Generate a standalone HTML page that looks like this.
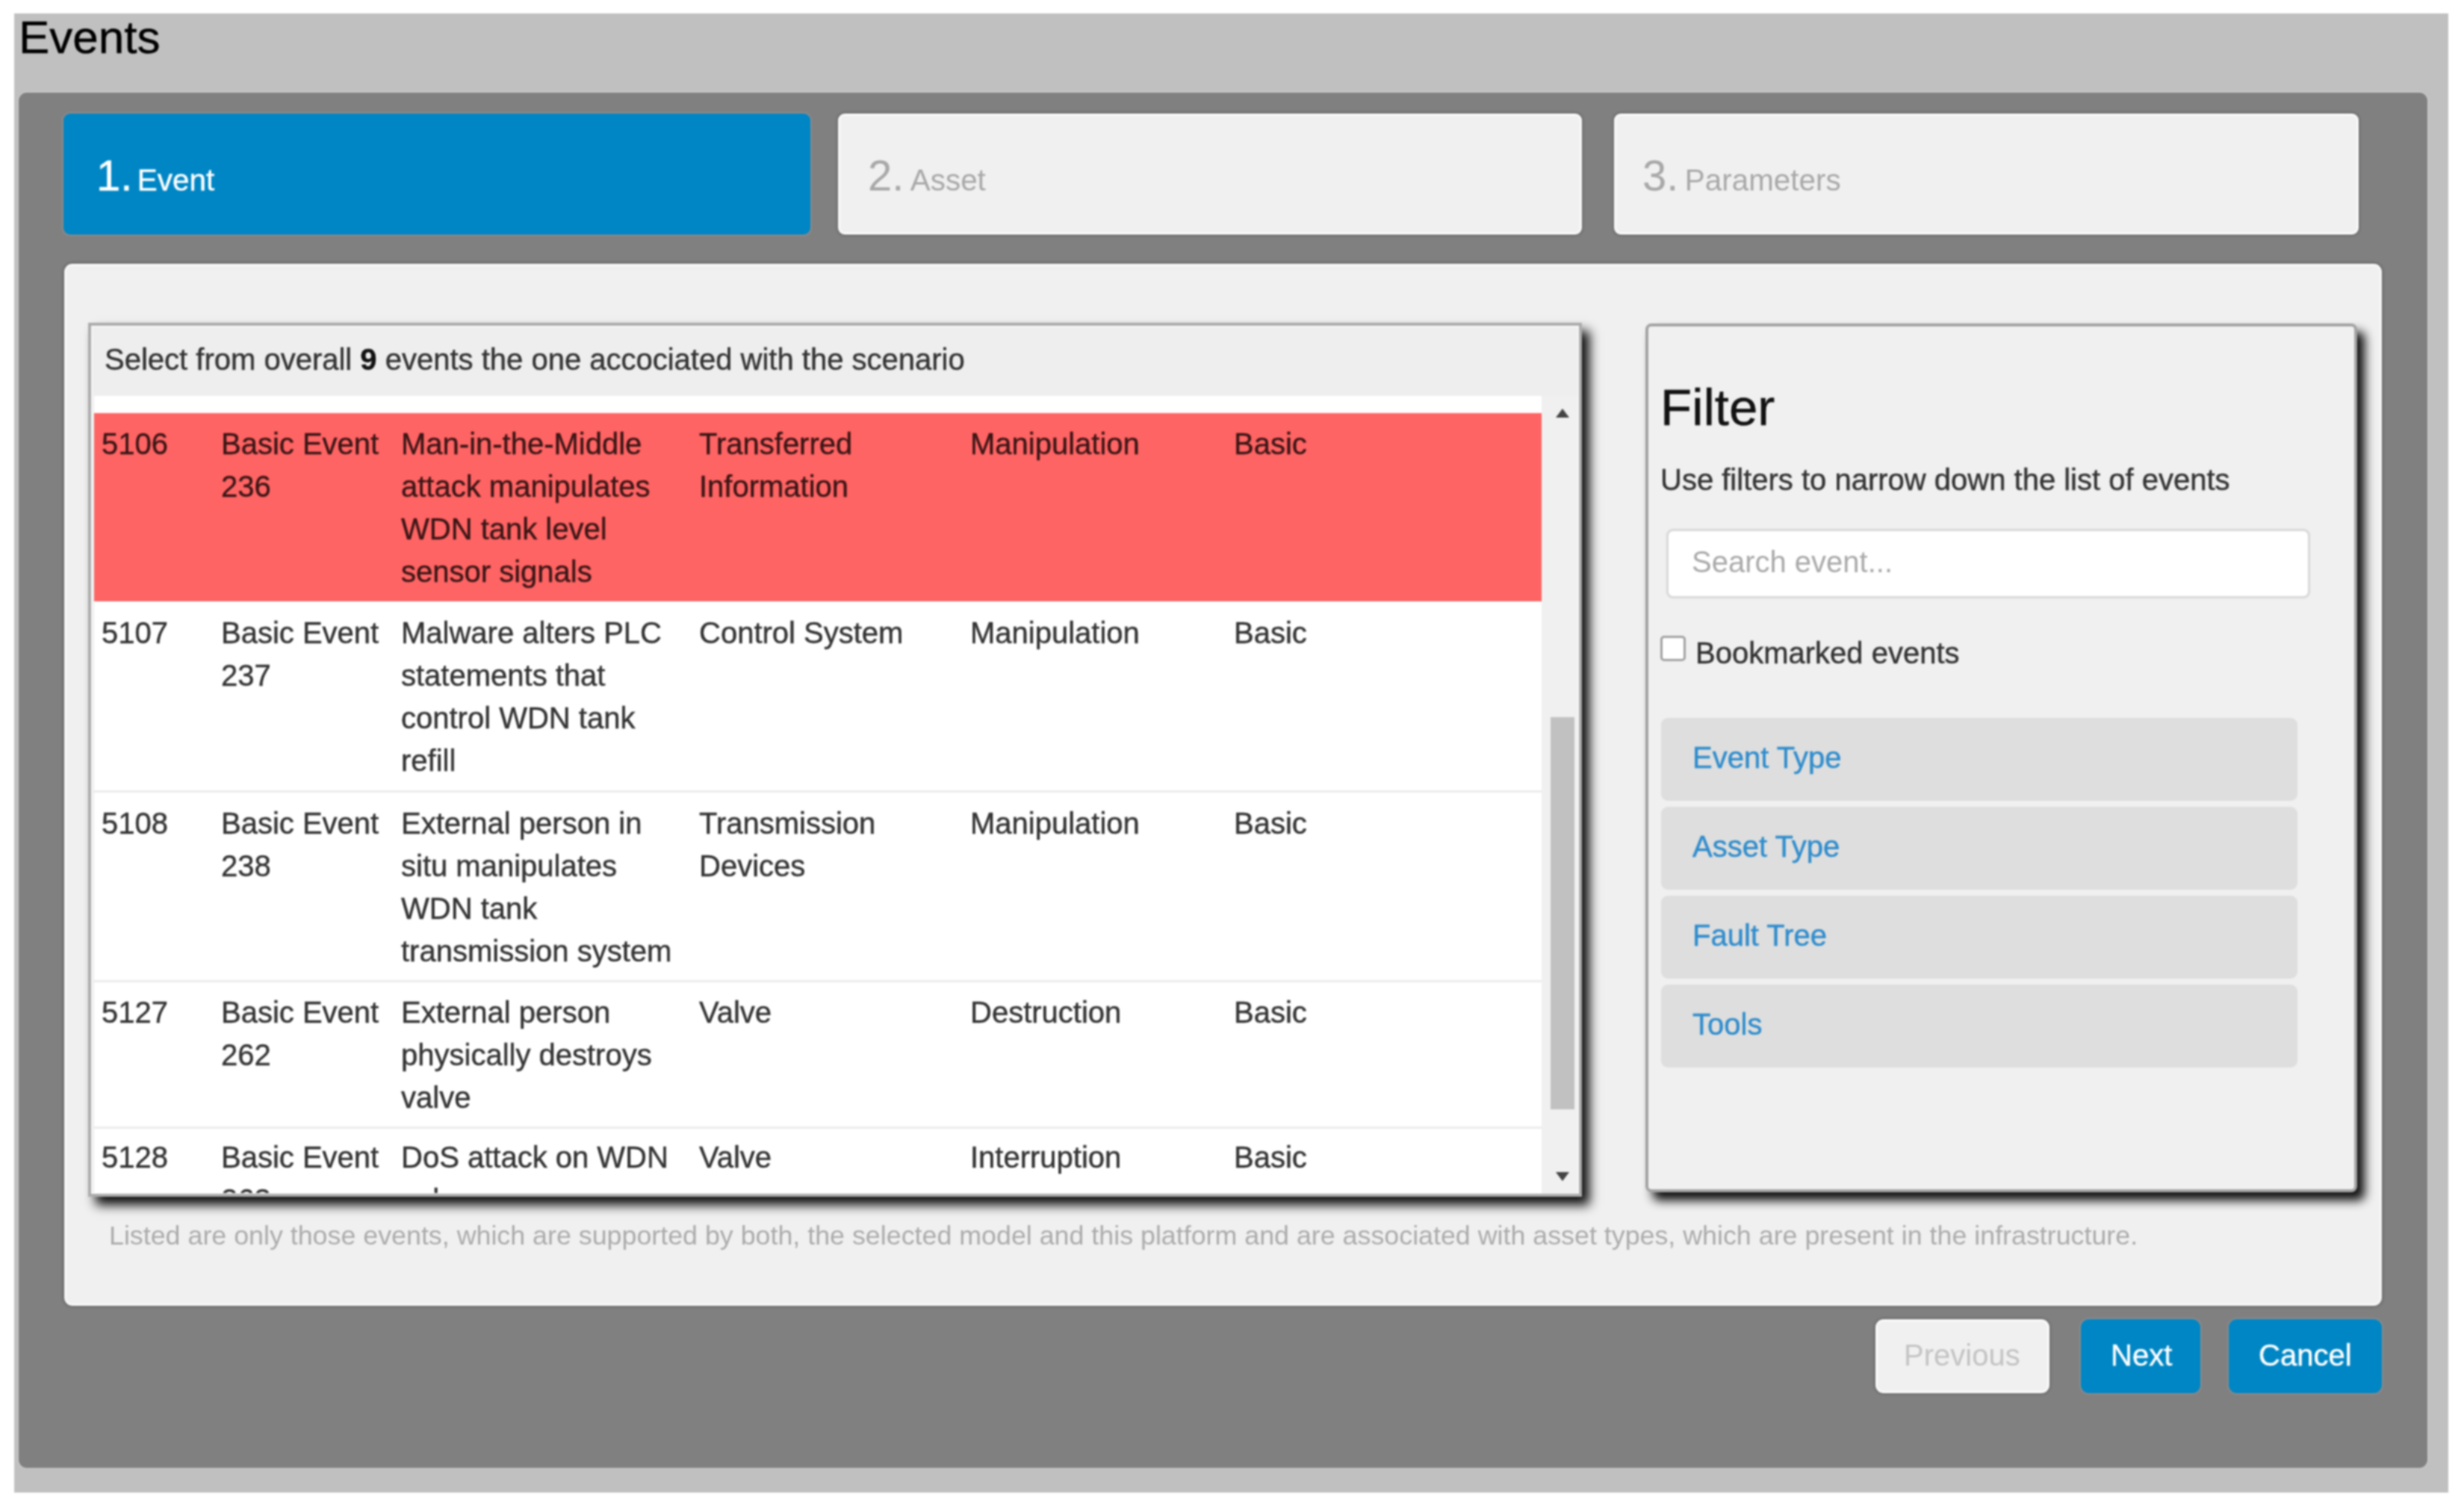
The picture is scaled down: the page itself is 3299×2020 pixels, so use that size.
<!DOCTYPE html>
<html><head><meta charset="utf-8">
<style>
*{margin:0;padding:0;box-sizing:border-box}
html,body{width:3299px;height:2020px;overflow:hidden;background:#fff;font-family:"Liberation Sans",sans-serif;color:#333}
.a{position:absolute}
.t,.cell,.acct{-webkit-text-stroke:0.45px currentColor}
.lt{-webkit-text-stroke:0 !important}
.t{position:absolute;line-height:1;white-space:nowrap}
#outer{left:19px;top:18px;width:3259px;height:1980px;background:#c0c0c0}
#title{left:25px;top:19px;font-size:62px;color:#000}
#panel{left:25px;top:124px;width:3225px;height:1841px;background:#808080;border-radius:11px;box-shadow:0 0 0 2px #c6c6c6}
.tab{top:152px;height:162px;border-radius:9px}
#tab1{left:85px;width:1000px;background:#0086c4;box-shadow:0 0 0 2px #8a8a8a}
#tab2{left:1122px;width:996px;background:#f0f0f0;border:3px solid #fafafa;box-shadow:0 0 3px 2px #6e6e6e}
#tab3{left:2161px;width:997px;background:#f0f0f0;border:3px solid #fafafa;box-shadow:0 0 3px 2px #6e6e6e}
.num{font-size:58px}
.lbl{font-size:40.4px;margin-left:4px}
#content{left:86px;top:353px;width:3103px;height:1395px;background:#f0f0f0;border:3px solid #f8f8f8;border-radius:11px;box-shadow:0 0 3px 2px #6a6a6a}
#tbox{left:118px;top:432px;width:2000px;height:1170px;background:#eeeeee;border:4px solid #acacac;box-shadow:10px 11px 14px rgba(0,0,0,.95),inset 0 0 0 2px #f8f8f8}
#fbox{left:2203px;top:433px;width:953px;height:1163px;background:#f0f0f0;border:4px solid #a4a4a4;border-radius:8px;box-shadow:10px 11px 14px rgba(0,0,0,.95)}
.row{position:absolute;left:126px;width:1938px;background:#fff;border-top:3px solid #ececec}
.cell{position:absolute;font-size:40px;line-height:57px;white-space:nowrap;color:#333}
.acc{position:absolute;left:2224px;width:852px;height:111px;background:#dedede;border-radius:9px}
.acct{position:absolute;left:42px;top:33px;font-size:40px;line-height:1;color:#2f8ccc}
.btn{position:absolute;top:1766px;height:99px;border-radius:11px}
</style></head><body><div id="wrap" style="position:absolute;left:0;top:0;width:3299px;height:2020px;filter:blur(0.9px)">
<div id="outer" class="a"></div>
<div id="title" class="t">Events</div>
<div id="panel" class="a"></div>

<div id="tab1" class="a tab"></div>
<div id="tab2" class="a tab"></div>
<div id="tab3" class="a tab"></div>
<div class="t" style="left:129px;top:206px;color:#fff"><span class="num">1.</span> <span class="lbl" style="margin-left:2px">Event</span></div>
<div class="t lt" style="left:1162px;top:206px;color:#a8a8a8"><span class="num">2.</span> <span class="lbl">Asset</span></div>
<div class="t lt" style="left:2199px;top:206px;color:#a8a8a8"><span class="num">3.</span> <span class="lbl">Parameters</span></div>

<div id="content" class="a"></div>

<div id="tbox" class="a"></div>
<div class="t" style="left:140px;top:461px;font-size:40px;color:#333">Select from overall <b style="color:#111">9</b> events the one accociated with the scenario</div>
<div class="a" style="left:126px;top:530px;width:1938px;height:23px;background:#fff"></div>
<div id="rows" class="a" style="left:0;top:0;width:3299px;height:1597px;overflow:hidden;clip-path:inset(530px 0 0 0)">
<!--ROWS-->
<div class="row" style="top:553px;height:252px;background:#ff6464;border-top:0;"></div>
<div class="cell" style="left:136px;top:566px;color:#3a1515;">5106</div>
<div class="cell" style="left:296px;top:566px;color:#3a1515;">Basic Event<br>236</div>
<div class="cell" style="left:537px;top:566px;color:#3a1515;">Man-in-the-Middle<br>attack manipulates<br>WDN tank level<br>sensor signals</div>
<div class="cell" style="left:936px;top:566px;color:#3a1515;">Transferred<br>Information</div>
<div class="cell" style="left:1299px;top:566px;color:#3a1515;">Manipulation</div>
<div class="cell" style="left:1652px;top:566px;color:#3a1515;">Basic</div>
<div class="row" style="top:805px;height:253px;border-top-color:#fff;"></div>
<div class="cell" style="left:136px;top:819px;">5107</div>
<div class="cell" style="left:296px;top:819px;">Basic Event<br>237</div>
<div class="cell" style="left:537px;top:819px;">Malware alters PLC<br>statements that<br>control WDN tank<br>refill</div>
<div class="cell" style="left:936px;top:819px;">Control System</div>
<div class="cell" style="left:1299px;top:819px;">Manipulation</div>
<div class="cell" style="left:1652px;top:819px;">Basic</div>
<div class="row" style="top:1058px;height:254px;"></div>
<div class="cell" style="left:136px;top:1074px;">5108</div>
<div class="cell" style="left:296px;top:1074px;">Basic Event<br>238</div>
<div class="cell" style="left:537px;top:1074px;">External person in<br>situ manipulates<br>WDN tank<br>transmission system</div>
<div class="cell" style="left:936px;top:1074px;">Transmission<br>Devices</div>
<div class="cell" style="left:1299px;top:1074px;">Manipulation</div>
<div class="cell" style="left:1652px;top:1074px;">Basic</div>
<div class="row" style="top:1312px;height:196px;"></div>
<div class="cell" style="left:136px;top:1327px;">5127</div>
<div class="cell" style="left:296px;top:1327px;">Basic Event<br>262</div>
<div class="cell" style="left:537px;top:1327px;">External person<br>physically destroys<br>valve</div>
<div class="cell" style="left:936px;top:1327px;">Valve</div>
<div class="cell" style="left:1299px;top:1327px;">Destruction</div>
<div class="cell" style="left:1652px;top:1327px;">Basic</div>
<div class="row" style="top:1508px;height:260px;"></div>
<div class="cell" style="left:136px;top:1521px;">5128</div>
<div class="cell" style="left:296px;top:1521px;">Basic Event<br>263</div>
<div class="cell" style="left:537px;top:1521px;">DoS attack on WDN<br>valve</div>
<div class="cell" style="left:936px;top:1521px;">Valve</div>
<div class="cell" style="left:1299px;top:1521px;">Interruption</div>
<div class="cell" style="left:1652px;top:1521px;">Basic</div>
<!--/ROWS-->
</div>


<!-- scrollbar -->
<div class="a" style="left:2064px;top:530px;width:48px;height:1068px;background:#f0f0f0"></div>
<div class="a" style="left:2076px;top:960px;width:32px;height:525px;background:#c1c1c1"></div>
<div class="a" style="left:2083px;top:547px;width:0;height:0;border-left:9px solid transparent;border-right:9px solid transparent;border-bottom:12px solid #444"></div>
<div class="a" style="left:2083px;top:1569px;width:0;height:0;border-left:9px solid transparent;border-right:9px solid transparent;border-top:12px solid #444"></div>

<div class="t lt" style="left:146px;top:1637px;font-size:35.8px;color:#ababab">Listed are only those events, which are supported by both, the selected model and this platform and are associated with asset types, which are present in the infrastructure.</div>
<div id="fbox" class="a"></div>

<div class="t" style="left:2223px;top:511px;font-size:69px;color:#111">Filter</div>
<div class="t" style="left:2223px;top:622px;font-size:40px;color:#333">Use filters to narrow down the list of events</div>
<div class="a" style="left:2231px;top:708px;width:862px;height:93px;background:#fff;border:3px solid #d9d9d9;border-radius:9px;box-shadow:0 0 2px #e0e0e0"></div>
<div class="t lt" style="left:2265px;top:732px;font-size:40px;color:#a9a9a9">Search event...</div>
<div class="a" style="left:2223px;top:851px;width:34px;height:34px;background:#fff;border:3px solid #a2a2a2;border-radius:5px"></div>
<div class="t" style="left:2270px;top:854px;font-size:40px;color:#333">Bookmarked events</div>
<div class="acc" style="top:961px"><div class="acct">Event Type</div></div>
<div class="acc" style="top:1080px"><div class="acct">Asset Type</div></div>
<div class="acc" style="top:1199px"><div class="acct">Fault Tree</div></div>
<div class="acc" style="top:1318px"><div class="acct">Tools</div></div>

<div class="btn" style="left:2511px;width:233px;background:#f0f0f0;border:3px solid #fafafa;box-shadow:0 0 3px 2px #6e6e6e"></div>
<div class="btn" style="left:2786px;width:160px;background:#0086c4;box-shadow:0 0 0 2px #8a8a8a"></div>
<div class="btn" style="left:2984px;width:205px;background:#0086c4;box-shadow:0 0 0 2px #8a8a8a"></div>

<div class="t lt" style="left:2549px;top:1794px;font-size:40px;color:#c3c3c3">Previous</div>
<div class="t" style="left:2826px;top:1794px;font-size:40px;color:#fff">Next</div>
<div class="t" style="left:3024px;top:1794px;font-size:40px;color:#fff">Cancel</div>
</div></body></html>
